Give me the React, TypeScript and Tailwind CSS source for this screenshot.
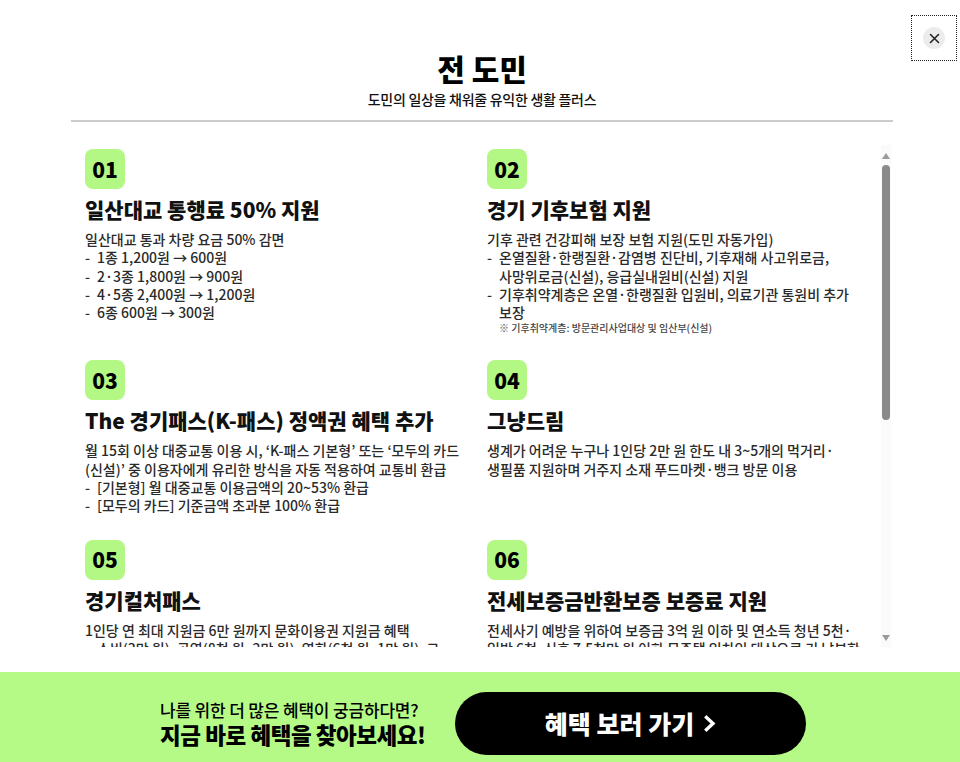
import React from "react";

const FONT = "font-['Noto_Sans_CJK_KR','Noto_Sans',sans-serif]";

function Badge({ n }: { n: string }) {
  return (
    <div className="w-[40px] h-[40px] rounded-[8px] bg-[#b3f884] flex items-center justify-center text-[21px] font-black text-black leading-none">
      {n}
    </div>
  );
}

function Card({ n, title, children }: { n: string; title: string; children: React.ReactNode }) {
  return (
    <div className="flex flex-col items-start">
      <Badge n={n} />
      <h3 className="mt-[6px] text-[21px] leading-[28px] font-black text-[#111] whitespace-nowrap">{title}</h3>
      <div className="mt-[7px] text-[14px] leading-[18.3px] text-[#2a2a2a] font-medium">{children}</div>
    </div>
  );
}

function L({ children }: { children: React.ReactNode }) {
  return <div className="whitespace-nowrap">{children}</div>;
}

function B({ children }: { children: React.ReactNode }) {
  return (
    <div className="flex whitespace-nowrap">
      <span className="w-[12px] shrink-0">-</span>
      <div>{children}</div>
    </div>
  );
}

export default function App() {
  return (
    <div className={`${FONT} w-[960px] h-[762px] bg-white flex flex-col overflow-hidden relative`}>
      {/* close button */}
      <button className="absolute top-[15px] right-[3px] w-[46px] h-[46px] border border-dotted border-[#222] flex items-center justify-center">
        <span className="w-[22px] h-[22px] rounded-full bg-[#ececec] flex items-center justify-center">
          <svg width="11" height="11" viewBox="0 0 11 11" fill="none" stroke="#222" strokeWidth="1.6" strokeLinecap="round">
            <path d="M1.5 1.5 L9.5 9.5 M9.5 1.5 L1.5 9.5" />
          </svg>
        </span>
      </button>

      <div className="h-[672px] pl-[71px] pr-[67px] flex flex-col">
        <div className="pt-[48px] flex flex-col items-center">
          <h1 className="text-[30px] leading-[40px] font-black text-black">전 도민</h1>
          <p className="mt-[2px] text-[14px] leading-[18px] font-medium text-[#111] tracking-[-0.02em]">도민의 일상을 채워줄 유익한 생활 플러스</p>
        </div>
        <div className="mt-[12px] h-[2px] bg-[#cccccc]" />

        <div className="mt-[23px] h-[502px] flex">
          <div className="flex-1 overflow-hidden pl-[14px] pr-[12px] pt-[4px]">
            <div className="grid grid-cols-2 gap-x-[20px] gap-y-[25px]">
              <Card n="01" title="일산대교 통행료 50% 지원">
                <L>일산대교 통과 차량 요금 50% 감면</L>
                <B>1종 1,200원 → 600원</B>
                <B>2·3종 1,800원 → 900원</B>
                <B>4·5종 2,400원 → 1,200원</B>
                <B>6종 600원 → 300원</B>
              </Card>
              <Card n="02" title="경기 기후보험 지원">
                <L>기후 관련 건강피해 보장 보험 지원(도민 자동가입)</L>
                <B>
                  온열질환·한랭질환·감염병 진단비, 기후재해 사고위로금,
                  <br />
                  사망위로금(신설), 응급실내원비(신설) 지원
                </B>
                <B>
                  기후취약계층은 온열·한랭질환 입원비, 의료기관 통원비 추가
                  <br />
                  보장
                </B>
                <div className="pl-[12px] text-[10px] leading-[14px] text-[#444] whitespace-nowrap">
                  ※ 기후취약계층: 방문관리사업대상 및 임산부(신설)
                </div>
              </Card>
              <Card n="03" title="The 경기패스(K-패스) 정액권 혜택 추가">
                <L>월 15회 이상 대중교통 이용 시, ‘K-패스 기본형’ 또는 ‘모두의 카드</L>
                <L>(신설)’ 중 이용자에게 유리한 방식을 자동 적용하여 교통비 환급</L>
                <B>[기본형] 월 대중교통 이용금액의 20~53% 환급</B>
                <B>[모두의 카드] 기준금액 초과분 100% 환급</B>
              </Card>
              <Card n="04" title="그냥드림">
                <L>생계가 어려운 누구나 1인당 2만 원 한도 내 3~5개의 먹거리·</L>
                <L>생필품 지원하며 거주지 소재 푸드마켓·뱅크 방문 이용</L>
              </Card>
              <Card n="05" title="경기컬처패스">
                <L>1인당 연 최대 지원금 6만 원까지 문화이용권 지원금 혜택</L>
                <B>
                  소비(3만 원), 공연(8천 원~2만 원), 영화(6천 원~1만 원), 그
                  <br />
                  외 문화 분야 이용 지원
                </B>
              </Card>
              <Card n="06" title="전세보증금반환보증 보증료 지원">
                <L>전세사기 예방을 위하여 보증금 3억 원 이하 및 연소득 청년 5천·</L>
                <L>일반 6천, 신혼 7.5천만 원 이하 무주택 임차인 대상으로 기 납부한</L>
                <L>보증료 지원</L>
              </Card>
            </div>
          </div>

          {/* scrollbar */}
          <div className="w-[10px] mr-[2px] flex flex-col items-center bg-[#fafafa]">
            <svg width="8" height="6" viewBox="0 0 8 6" className="mt-[8px]">
              <path d="M4 0 L8 6 L0 6 Z" fill="#9a9a9a" />
            </svg>
            <div className="mt-[6px] w-[8px] h-[255px] rounded-full bg-[#8a8a8a]" />
            <div className="flex-1" />
            <svg width="8" height="6" viewBox="0 0 8 6" className="mb-[6px]">
              <path d="M0 0 L8 0 L4 6 Z" fill="#9a9a9a" />
            </svg>
          </div>
        </div>
      </div>

      {/* banner */}
      <div className="h-[90px] bg-[#b5fa86] flex items-center pl-[160px] pt-[12px]">
        <div className="flex flex-col w-[268px]">
          <span className="text-[17px] leading-[22px] font-medium text-black whitespace-nowrap tracking-[-0.01em]">나를 위한 더 많은 혜택이 궁금하다면?</span>
          <span className="text-[22.5px] leading-[26px] font-black text-black whitespace-nowrap tracking-[-0.02em]">지금 바로 혜택을 찾아보세요!</span>
        </div>
        <div className="ml-[27px] w-[351px] h-[63px] rounded-full bg-black flex items-center justify-center gap-[10px]">
          <span className="text-[25px] leading-none font-black text-white">혜택 보러 가기</span>
          <svg width="12" height="17" viewBox="0 0 12 17" fill="none" stroke="white" strokeWidth="3.4" strokeLinecap="square">
            <path d="M2.5 2.5 L9 8.5 L2.5 14.5" />
          </svg>
        </div>
      </div>
    </div>
  );
}
